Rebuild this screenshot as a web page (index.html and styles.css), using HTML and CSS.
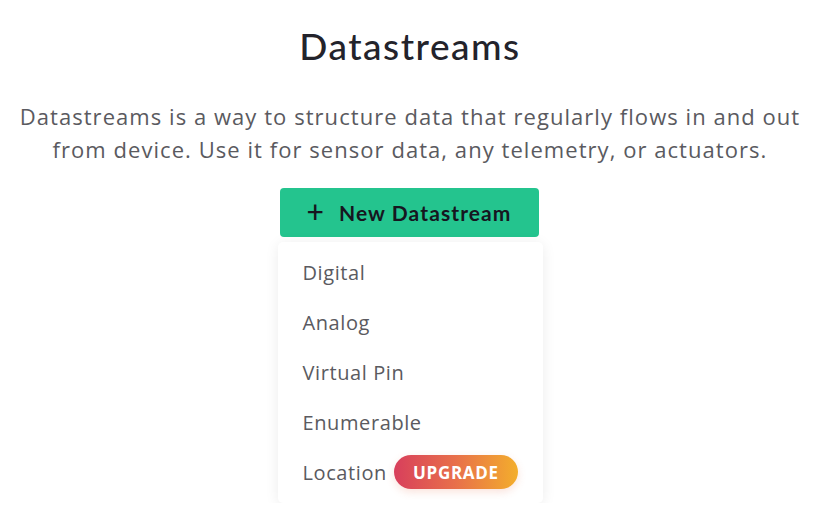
FILE: index.html
```html
<!DOCTYPE html>
<html lang="en">
<head>
    <meta charset="UTF-8">
    <meta name="viewport" content="width=device-width, initial-scale=1.0">
    <title>Datastreams</title>
    <link rel="stylesheet" href="styles.css">
</head>
<body>
    <div class="empty-state">
        <h1>Datastreams</h1>
        <p class="description">Datastreams is a way to structure data that regularly flows in and out<br>from device. Use it for sensor data, any telemetry, or actuators.</p>
        <div class="dropdown">
            <button class="new-button" type="button"><span class="plus">+</span>New Datastream</button>
            <ul class="menu">
                <li>Digital</li>
                <li>Analog</li>
                <li>Virtual Pin</li>
                <li>Enumerable</li>
                <li>Location <span class="upgrade">UPGRADE</span></li>
            </ul>
        </div>
    </div>
</body>
</html>
```

FILE: styles.css
```css
body {
    margin: 0;
    background: #ffffff;
    font-family: 'Open Sans', 'Noto Sans', sans-serif;
}
.empty-state {
    display: flex;
    flex-direction: column;
    align-items: center;
    padding: 24px 19px 0 0;
}
h1 {
    margin: 0;
    font-family: 'Lato', sans-serif;
    font-size: 37px;
    font-weight: 500;
    color: #23232b;
    letter-spacing: 1.5px;
    line-height: 44px;
}
.description {
    margin: 32px 0 0;
    text-align: center;
    font-size: 22px;
    line-height: 33px;
    letter-spacing: 1.05px;
    color: #5a5a60;
}
.dropdown {
    margin-top: 22px;
    width: 265px;
    display: flex;
    flex-direction: column;
}
.new-button {
    width: 259px;
    height: 49px;
    margin-left: 2px;
    border: none;
    border-radius: 4px;
    background-color: #24c48e;
    color: #16161f;
    font-family: 'Lato', sans-serif;
    font-size: 21px;
    font-weight: 700;
    letter-spacing: 1.1px;
    cursor: pointer;
    display: flex;
    align-items: center;
    justify-content: center;
}
.plus {
    font-size: 30px;
    font-weight: 500;
    margin-right: 14px;
    line-height: 1;
    position: relative;
    top: -2px;
}
.menu {
    list-style: none;
    margin: 5px 0 0;
    padding: 5px 0 6px;
    background: #fff;
    border-radius: 5px;
    box-shadow: 0 2px 14px rgba(0, 0, 0, 0.08);
}
.menu li {
    height: 50px;
    display: flex;
    align-items: center;
    padding-left: 25px;
    font-size: 20px;
    letter-spacing: 0.6px;
    color: #5a5a60;
}
.upgrade {
    margin-left: 7px;
    height: 34px;
    padding: 0 19px;
    border-radius: 17px;
    background: linear-gradient(90deg, #d83f5c 0%, #e8704a 50%, #f3ae2c 100%);
    color: #fff;
    font-size: 17px;
    font-weight: 700;
    letter-spacing: 0.7px;
    display: flex;
    align-items: center;
    box-shadow: 0 3px 8px rgba(232, 112, 74, 0.2);
}
```
